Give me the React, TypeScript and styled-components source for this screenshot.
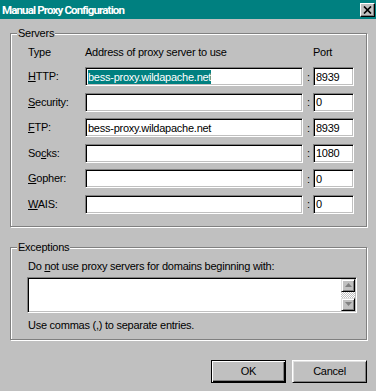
import React from "react";
import styled, { createGlobalStyle } from "styled-components";

const GlobalStyle = createGlobalStyle`
  html, body { margin: 0; padding: 0; }
  body {
    width: 376px;
    height: 391px;
    overflow: hidden;
    background: #c0c0c0;
    font-family: "Liberation Sans", Arial, sans-serif;
    font-size: 11px;
    letter-spacing: -0.25px;
    color: #000;
  }
  * { box-sizing: border-box; }
`;

const Window = styled.div`
  width: 376px;
  height: 391px;
  display: flex;
  flex-direction: column;
  background: #c0c0c0;
`;

const TitleBar = styled.div`
  height: 19px;
  background: #008080;
  display: flex;
  align-items: center;
  justify-content: space-between;
  padding: 0 1px 0 2px;
`;

const Title = styled.span`
  color: #fff;
  font-family: Roboto, "Liberation Sans", sans-serif;
  font-weight: 700;
  font-size: 11.5px;
  letter-spacing: -0.85px;
  line-height: 14px;
`;

const CloseButton = styled.div`
  width: 15px;
  height: 14px;
  margin-top: 1px;
  background: #c0c0c0;
  border: 1px solid;
  border-color: #fff #000 #000 #fff;
  box-shadow: inset -1px -1px 0 #808080;
  display: flex;
  align-items: center;
  justify-content: center;
`;

const Body = styled.div`
  display: flex;
  flex-direction: column;
  padding: 14px 9px 0 10px;
`;

const GroupBox = styled.div<{ $gap?: number }>`
  margin-top: ${(p) => p.$gap ?? 0}px;
  border: 1px solid #808080;
  box-shadow: inset 1px 1px 0 #fff, 1px 1px 0 #fff;
`;

const Legend = styled.div`
  width: fit-content;
  margin: -7px 0 -6px 6px;
  padding: 0 1px;
  line-height: 13px;
  background: #c0c0c0;
`;

const GroupInner = styled.div<{ $pad: string }>`
  padding: ${(p) => p.$pad};
  display: flex;
  flex-direction: column;
`;

const ServerGrid = styled.div`
  display: grid;
  grid-template-columns: 57px 218px 10px 41px;
  align-items: center;
`;

const HeaderRow = styled(ServerGrid)`
  height: 13px;
  line-height: 13px;
  margin-bottom: 8px;
`;

const Rows = styled.div`
  display: flex;
  flex-direction: column;
  gap: 6.6px;
`;

const Row = styled(ServerGrid)`
  height: 19px;
`;

const Label = styled.span`
  line-height: 13px;
`;

const Key = styled.span`
  text-decoration: underline;
  text-underline-offset: 1px;
`;

const Colon = styled.span`
  text-align: center;
  padding-left: 1px;
`;

const Field = styled.div`
  height: 19px;
  background: #fff;
  border: 1px solid;
  border-color: #808080 #fff #fff #808080;
  box-shadow: inset 1px 1px 0 #000, inset -1px -1px 0 #c0c0c0;
  display: flex;
  align-items: center;
  padding: 0 2px 0 2px;
  white-space: nowrap;
  overflow: hidden;
`;

const Selected = styled.span`
  background: #008080;
  color: #fff;
  line-height: 14px;
`;

const Text = styled.div<{ $mt?: number }>`
  margin-top: ${(p) => p.$mt ?? 0}px;
  line-height: 13px;
`;

const TextBox = styled.div`
  margin: 4px 0 0 -1px;
  width: 330px;
  height: 36px;
  background: #fff;
  border: 1px solid;
  border-color: #808080 #fff #fff #808080;
  box-shadow: inset 1px 1px 0 #000, inset -1px -1px 0 #c0c0c0;
  padding: 1px;
  display: flex;
  justify-content: flex-end;
`;

const ScrollBar = styled.div`
  width: 14px;
  display: flex;
  flex-direction: column;
`;

const ScrollButton = styled.div`
  height: 13px;
  background: #c0c0c0;
  border: 1px solid;
  border-color: #dfdfdf #000 #000 #dfdfdf;
  box-shadow: inset 1px 1px 0 #fff, inset -1px -1px 0 #808080;
  display: flex;
  align-items: center;
  justify-content: center;
`;

const ScrollTrack = styled.div`
  flex: 1;
  background-color: #c0c0c0;
  background-image: repeating-conic-gradient(#fff 0 25%, #c0c0c0 0 50%);
  background-size: 2px 2px;
`;

const ButtonRow = styled.div`
  margin-top: 20px;
  display: flex;
  justify-content: flex-end;
  gap: 6px;
`;

const Button = styled.button<{ $default?: boolean }>`
  width: 75px;
  height: 23px;
  padding: 0;
  font-family: inherit;
  font-size: 11px;
  letter-spacing: -0.25px;
  color: #000;
  background: #c0c0c0;
  border: 1px solid;
  border-color: ${(p) => (p.$default ? "#000" : "#fff #000 #000 #fff")};
  box-shadow: ${(p) =>
    p.$default
      ? "inset 1px 1px 0 #fff, inset -1px -1px 0 #000, inset -2px -2px 0 #808080"
      : "inset 1px 1px 0 #dfdfdf, inset -1px -1px 0 #808080"};
`;

const Arrow = ({ up }: { up?: boolean }) => (
  <svg width="7" height="4" viewBox="0 0 7 4">
    <path d={up ? "M3.5 0 L7 4 L0 4 Z" : "M0 0 L7 0 L3.5 4 Z"} fill="#808080" />
  </svg>
);

type Server = { key: string; rest: string; pre?: string; addr: string; port: string; selected?: boolean };

const servers: Server[] = [
  { key: "H", rest: "TTP:", addr: "bess-proxy.wildapache.net", port: "8939", selected: true },
  { key: "S", rest: "ecurity:", addr: "", port: "0" },
  { key: "F", rest: "TP:", addr: "bess-proxy.wildapache.net", port: "8939" },
  { pre: "So", key: "c", rest: "ks:", addr: "", port: "1080" },
  { key: "G", rest: "opher:", addr: "", port: "0" },
  { key: "W", rest: "AIS:", addr: "", port: "0" },
];

export default function App() {
  return (
    <>
      <GlobalStyle />
      <Window>
        <TitleBar>
          <Title>Manual Proxy Configuration</Title>
          <CloseButton>
            <svg width="9" height="8" viewBox="0 0 9 8">
              <path d="M1 0.5 L8 7.5 M8 0.5 L1 7.5" stroke="#000" strokeWidth="1.7" />
            </svg>
          </CloseButton>
        </TitleBar>
        <Body>
          <GroupBox>
            <Legend>Servers</Legend>
            <GroupInner $pad="12px 12px 12px 17px">
              <HeaderRow>
                <Label>Type</Label>
                <Label>Address of proxy server to use</Label>
                <span />
                <Label>Port</Label>
              </HeaderRow>
              <Rows>
                {servers.map((s) => (
                  <Row key={s.key + s.rest}>
                    <Label>
                      {s.pre}
                      <Key>{s.key}</Key>
                      {s.rest}
                    </Label>
                    <Field>{s.selected ? <Selected>{s.addr}</Selected> : s.addr}</Field>
                    <Colon>:</Colon>
                    <Field>{s.port}</Field>
                  </Row>
                ))}
              </Rows>
            </GroupInner>
          </GroupBox>
          <GroupBox $gap={20}>
            <Legend>Exceptions</Legend>
            <GroupInner $pad="12px 12px 7px 17px">
              <Text>
                Do <Key>n</Key>ot use proxy servers for domains beginning with:
              </Text>
              <TextBox>
                <ScrollBar>
                  <ScrollButton>
                    <Arrow up />
                  </ScrollButton>
                  <ScrollTrack />
                  <ScrollButton>
                    <Arrow />
                  </ScrollButton>
                </ScrollBar>
              </TextBox>
              <Text $mt={6}>Use commas (,) to separate entries.</Text>
            </GroupInner>
          </GroupBox>
          <ButtonRow>
            <Button $default>OK</Button>
            <Button>Cancel</Button>
          </ButtonRow>
        </Body>
      </Window>
    </>
  );
}
